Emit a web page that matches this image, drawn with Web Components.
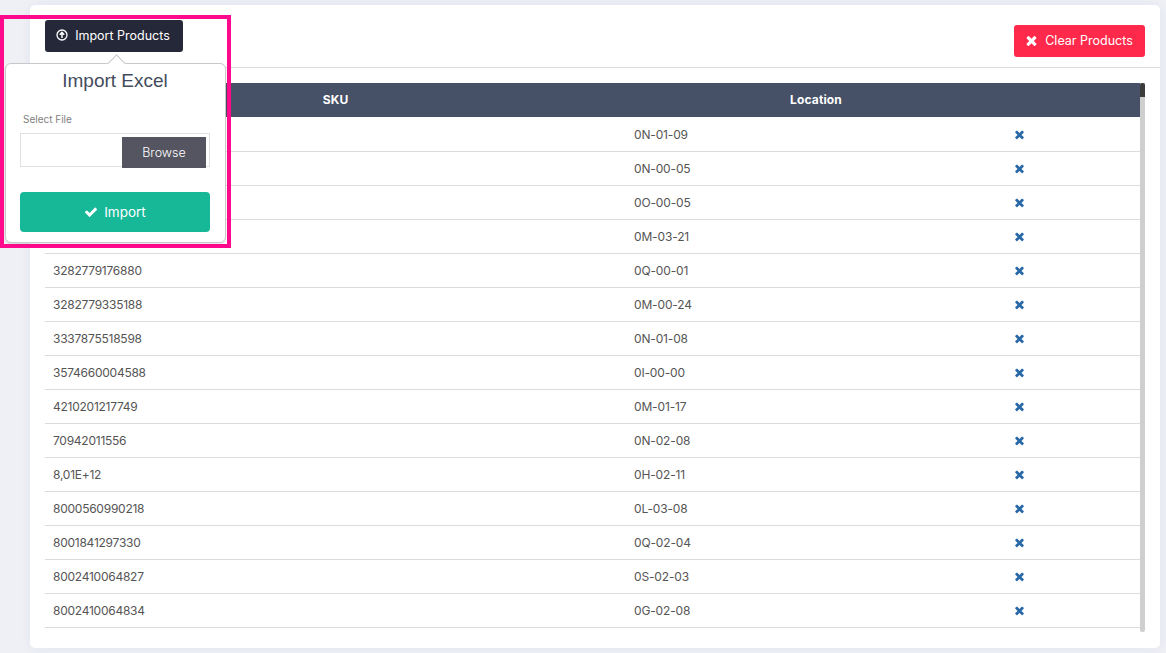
<!DOCTYPE html>
<html lang="en">
<head>
<meta charset="utf-8">
<title>Import Products</title>
<style>
  html, body { margin: 0; height: 100%; }
  body { background: #eef0f6; font-family: Inter, "Liberation Sans", sans-serif; overflow: hidden; }
</style>
</head>
<body>
<product-page></product-page>
<script>
const ICONS = {
  times: 'M1490 1322q0 40-28 68l-136 136q-28 28-68 28t-68-28l-294-294-294 294q-28 28-68 28t-68-28l-136-136q-28-28-28-68t28-68l294-294-294-294q-28-28-28-68t28-68l136-136q28-28 68-28t68 28l294 294 294-294q28-28 68-28t68 28l136 136q28 28 28 68t-28 68l-294 294 294 294q28 28 28 68z',
  check: 'M1671 566q0 40-28 68l-724 724-136 136q-28 28-68 28t-68-28l-136-136-362-362q-28-28-28-68t28-68l136-136q28-28 68-28t68 28l294 295 656-657q28-28 68-28t68 28l136 136q28 28 28 68z'
}

/**
 * A font-awesome style glyph, sized by the size attribute.
 */
customElements.define('fa-icon', class extends HTMLElement {
  connectedCallback () {
    const size = this.getAttribute('size') || 14
    this.attachShadow({ mode: 'open' }).innerHTML = `
      <style>
        :host { display: inline-flex; }
        svg { display: block; fill: currentColor; }
      </style>
      <svg width="${size}" height="${size}" viewBox="0 0 1792 1792"><path d="${ICONS[this.getAttribute('name')]}"/></svg>`
  }
})

const actionTemplate = document.createElement('template')
actionTemplate.innerHTML = `
  <style>
    :host {
      display: inline-flex;
      align-items: center;
      justify-content: center;
      box-sizing: border-box;
      height: 32px;
      padding: 0 2px 2px 0;
      border-radius: 3px;
      color: #fff;
      font-size: 12.5px;
      font-weight: 400;
      white-space: nowrap;
    }
  </style>
  <slot></slot>
`

/**
 * Coloured button, the background comes from the user.
 */
customElements.define('action-button', class extends HTMLElement {
  constructor () {
    super()
    this.attachShadow({ mode: 'open' }).appendChild(actionTemplate.content.cloneNode(true))
  }
})

const popoverTemplate = document.createElement('template')
popoverTemplate.innerHTML = `
  <style>
    :host {
      position: absolute;
      left: 0;
      top: 15px;
      width: 231px;
      height: 233px;
      box-sizing: border-box;
      border: 4px solid #ff0a8c;
      z-index: 5;
    }
    .trigger {
      position: absolute;
      left: 41px;
      top: 1px;
      width: 138px;
      background: #252838;
      gap: 7px;
    }
    .trigger svg { display: block; }
    .panel {
      position: absolute;
      left: 1px;
      top: 44px;
      width: 221px;
      height: 180px;
      box-sizing: border-box;
      padding: 6px 15px 0 14px;
      background: #fff;
      border: 1px solid #c9c9c9;
      border-radius: 6px;
      box-shadow: 0 1px 2px rgba(0, 0, 0, 0.12);
    }
    .panel::before {
      content: '';
      position: absolute;
      left: 104px;
      top: -7px;
      width: 12px;
      height: 12px;
      background: #fff;
      border-left: 1px solid #c9c9c9;
      border-top: 1px solid #c9c9c9;
      transform: rotate(45deg);
    }
    h3 {
      position: relative;
      margin: 0;
      text-align: center;
      font: 400 19px/22px "Liberation Sans", sans-serif;
      color: #434c5c;
    }
    label {
      display: block;
      margin: 20px 0 0 3px;
      height: 14px;
      font-size: 10px;
      line-height: 14px;
      font-weight: 400;
      color: #808080;
    }
    .file {
      display: flex;
      justify-content: flex-end;
      box-sizing: border-box;
      height: 34px;
      margin-top: 7px;
      padding: 3px 3px 0 0;
      border: 1px solid #e0e0e0;
    }
    .browse {
      width: 84px;
      height: 31px;
      flex: none;
      background: #545560;
      color: #fff;
      font-size: 12.5px;
      line-height: 31px;
      text-align: center;
      font-weight: 300;
    }
    .import {
      display: flex;
      width: 190px;
      height: 40px;
      margin-top: 25px;
      padding: 0;
      background: #16b897;
      border-radius: 4px;
      gap: 6px;
      font-size: 13.5px;
      font-weight: 400;
    }
  </style>
  <action-button class="trigger">
    <svg width="12" height="12" viewBox="0 0 12 12" fill="none" stroke="#fff">
      <circle cx="6" cy="6" r="5" stroke-width="1.3"/>
      <path d="M6 9V3.6M3.8 5.8 6 3.4l2.2 2.4" stroke-width="1.5"/>
    </svg>
    <span>Import Products</span>
  </action-button>
  <div class="panel">
    <h3>Import Excel</h3>
    <label>Select File</label>
    <div class="file"><div class="browse">Browse</div></div>
    <action-button class="import"><fa-icon name="check" size="14"></fa-icon><span>Import</span></action-button>
  </div>
`

/**
 * The open import popover with its highlight frame.
 */
customElements.define('import-popover', class extends HTMLElement {
  constructor () {
    super()
    this.attachShadow({ mode: 'open' }).appendChild(popoverTemplate.content.cloneNode(true))
  }
})

const tableTemplate = document.createElement('template')
tableTemplate.innerHTML = `
  <style>
    :host {
      display: flex;
      height: 549px;
      overflow: hidden;
      color: #555;
      font-size: 12px;
      letter-spacing: -0.15px;
    }
    .clip { flex: 1; min-width: 0; }
    table { width: 100%; table-layout: fixed; border-collapse: separate; border-spacing: 0; }
    th {
      height: 35px;
      padding: 0 0 2px;
      box-sizing: border-box;
      background: #465066;
      background-clip: padding-box;
      border-bottom: 1px solid #fff;
      color: #fff;
      font-size: 12px;
      font-weight: 700;
      letter-spacing: 0.15px;
      text-align: center;
    }
    td {
      height: 34px;
      padding: 0 8px;
      box-sizing: border-box;
      border-bottom: 1px solid #dcdcdc;
    }
    td.sku { letter-spacing: -0.25px; }
    td.remove { padding-left: 7px; }
    td fa-icon { color: #2a69a8; vertical-align: middle; margin-top: -2px; }
    .track {
      width: 5px;
      flex: none;
      background: #cfcfcf;
      border-radius: 0 0 2px 2px;
    }
    .thumb { height: 14px; background: #3c3c3c; border-radius: 2px 2px 0 0; }
  </style>
  <div class="clip">
    <table>
      <colgroup><col style="width:581px"><col style="width:380px"><col></colgroup>
      <thead><tr><th>SKU</th><th>Location</th><th></th></tr></thead>
      <tbody></tbody>
    </table>
  </div>
  <div class="track"><div class="thumb"></div></div>
`

// the first four SKUs sit behind the popover in the screenshot
const PRODUCTS = [
  ['', '0N-01-09'],
  ['', '0N-00-05'],
  ['', '0O-00-05'],
  ['', '0M-03-21'],
  ['3282779176880', '0Q-00-01'],
  ['3282779335188', '0M-00-24'],
  ['3337875518598', '0N-01-08'],
  ['3574660004588', '0I-00-00'],
  ['4210201217749', '0M-01-17'],
  ['70942011556', '0N-02-08'],
  ['8,01E+12', '0H-02-11'],
  ['8000560990218', '0L-03-08'],
  ['8001841297330', '0Q-02-04'],
  ['8002410064827', '0S-02-03'],
  ['8002410064834', '0G-02-08']
]

/**
 * Products table with a thin scrollbar look on the right.
 */
customElements.define('product-table', class extends HTMLElement {
  constructor () {
    super()
    this.attachShadow({ mode: 'open' }).appendChild(tableTemplate.content.cloneNode(true))
    const body = this.shadowRoot.querySelector('tbody')
    for (const [sku, location] of PRODUCTS) {
      const row = document.createElement('tr')
      row.innerHTML = `<td class="sku">${sku}</td><td>${location}</td><td class="remove"><fa-icon name="times" size="13"></fa-icon></td>`
      body.appendChild(row)
    }
  }
})

const pageTemplate = document.createElement('template')
pageTemplate.innerHTML = `
  <style>
    :host {
      display: block;
      box-sizing: border-box;
      height: 653px;
      padding: 5px 6px 5px 30px;
    }
    .card {
      height: 643px;
      background: #fff;
      border-radius: 5px;
      box-shadow: 0 0 12px rgba(40, 45, 70, 0.06);
    }
    header {
      display: flex;
      justify-content: flex-end;
      box-sizing: border-box;
      height: 63px;
      padding: 20px 15px 0;
      border-bottom: 1px solid #dcdcdc;
    }
    .clear { width: 131px; background: #ff2a4b; gap: 6px; }
    .content { padding: 15px 15px 0; }
  </style>
  <div class="card">
    <header>
      <action-button class="clear"><fa-icon name="times" size="15"></fa-icon><span>Clear Products</span></action-button>
    </header>
    <div class="content"><product-table></product-table></div>
  </div>
  <import-popover></import-popover>
`

/**
 * The whole page: card, header and table.
 */
customElements.define('product-page', class extends HTMLElement {
  constructor () {
    super()
    this.attachShadow({ mode: 'open' }).appendChild(pageTemplate.content.cloneNode(true))
  }
})
</script>
</body>
</html>
